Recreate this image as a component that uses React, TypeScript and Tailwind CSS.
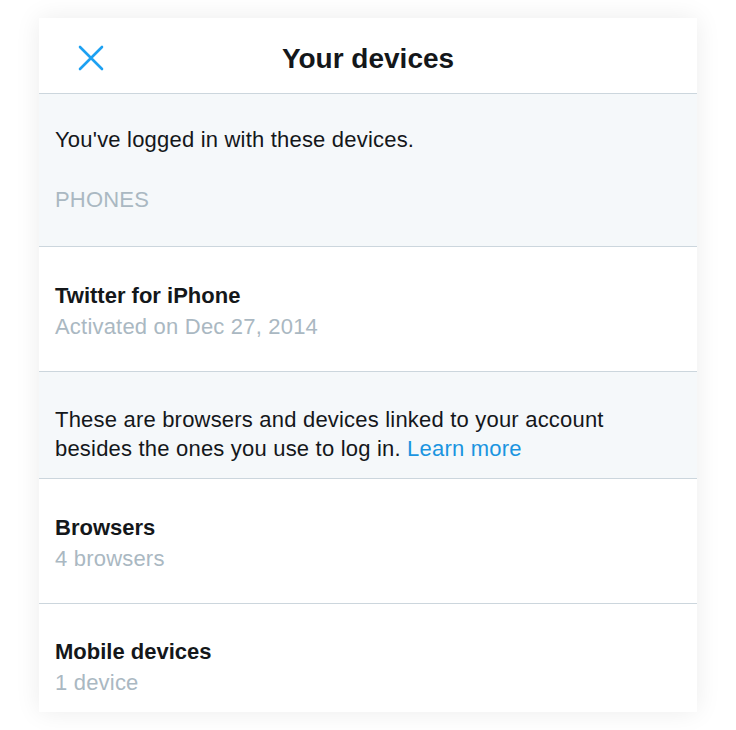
import React from 'react';

const CloseIcon = () => (
  <svg className="w-[26px] h-[26px]" viewBox="0 0 26 26" fill="none" stroke="#1da1f2" strokeWidth={2.6} strokeLinecap="round">
    <path d="M2 2L24 24M24 2L2 24" />
  </svg>
);

const DeviceRow: React.FC<{ title: string; sub: string; last?: boolean }> = ({ title, sub, last }) => (
  <div className={`px-4 ${last ? 'pt-[33px] pb-[12px]' : 'pt-[34px] pb-[29px] border-b border-[#ccd6dd]'}`}>
    <div className="text-[22px] leading-[30px] font-bold text-[#14171a]">{title}</div>
    <div className="text-[22px] leading-[31px] tracking-[0.2px] text-[#aab8c2]">{sub}</div>
  </div>
);

export default function App() {
  return (
    <div className="min-h-screen bg-white flex justify-center pt-[18px]" style={{ fontFamily: '"Liberation Sans", Arial, sans-serif' }}>
      <div className="w-[658px] h-[694px] bg-white overflow-hidden shadow-[0_0_24px_rgba(0,0,0,0.08)]">
        {/* Header */}
        <div className="relative h-[76px] flex items-center justify-center pt-[6px] border-b border-[#ccd6dd]">
          <button className="absolute left-[39px] top-[27px]">
            <CloseIcon />
          </button>
          <h1 className="text-[28px] font-bold text-[#14171a]">Your devices</h1>
        </div>

        {/* Intro */}
        <div className="bg-[#f5f8fa] px-4 pt-[31px] pb-[31px] border-b border-[#ccd6dd]">
          <p className="text-[22px] leading-[30px] tracking-[0.2px] text-[#14171a]">You've logged in with these devices.</p>
          <p className="mt-[30px] text-[22px] leading-[30px] tracking-[0.2px] text-[#aab8c2]">PHONES</p>
        </div>

        <DeviceRow title="Twitter for iPhone" sub="Activated on Dec 27, 2014" />

        {/* Linked */}
        <div className="bg-[#f5f8fa] pl-4 pr-10 pt-[33px] pb-[15px] border-b border-[#ccd6dd]">
          <p className="text-[22px] leading-[29px] tracking-[0.2px] text-[#14171a]">
            These are browsers and devices linked to your account besides the ones you use to log in.{' '}
            <span className="text-[#1b95e0]">Learn more</span>
          </p>
        </div>

        <DeviceRow title="Browsers" sub="4 browsers" />
        <DeviceRow title="Mobile devices" sub="1 device" last />
      </div>
    </div>
  );
}
